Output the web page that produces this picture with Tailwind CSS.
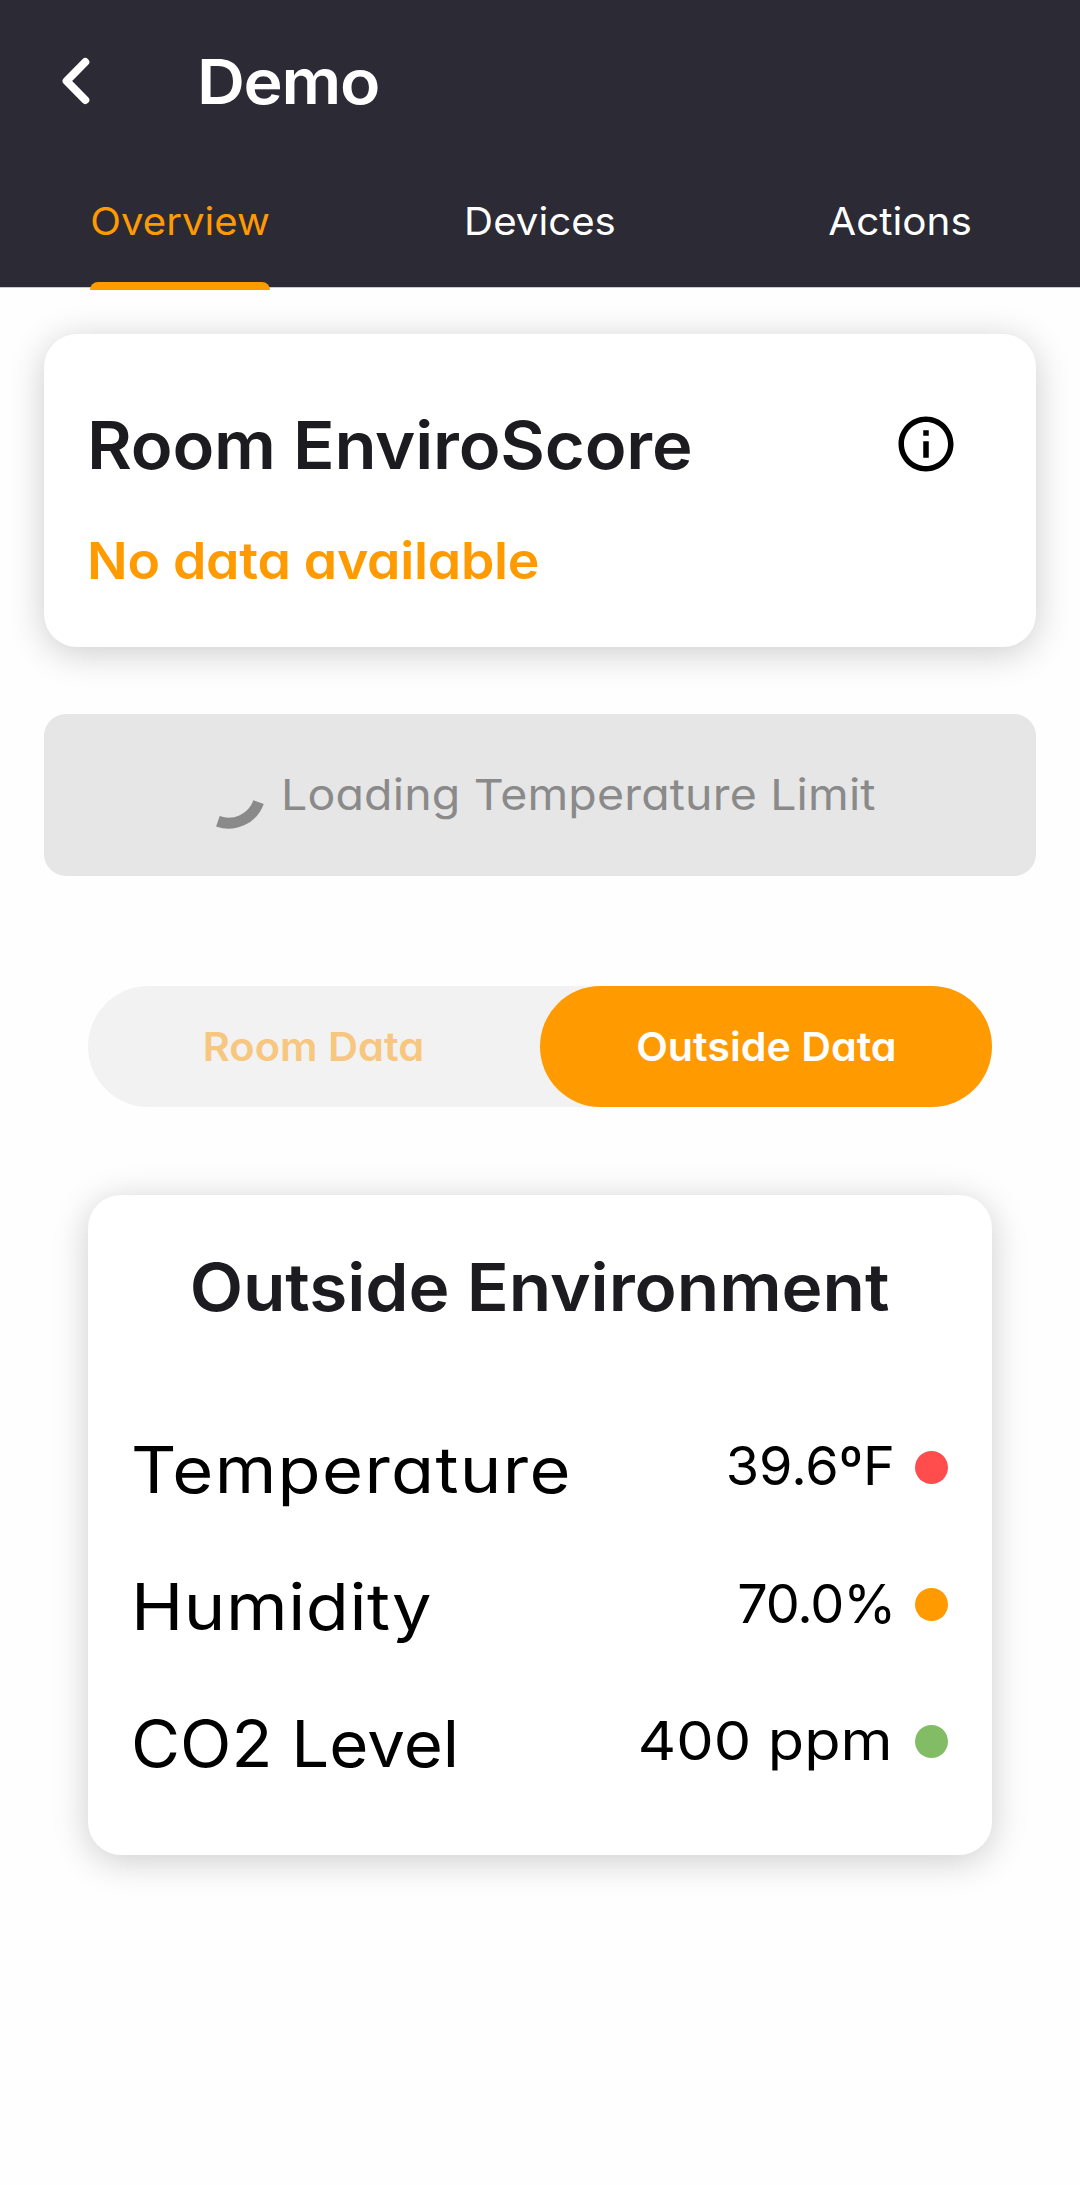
<!DOCTYPE html>
<html lang="en">
<head>
<meta charset="utf-8">
<title>Demo</title>
<script src="https://cdn.jsdelivr.net/npm/@tailwindcss/browser@4"></script>
</head>
<body class="min-h-screen bg-[#fefefe] font-[Inter,sans-serif] text-black whitespace-nowrap [font-feature-settings:'cv11']">

<header class="h-[288px] border-b border-[#c9c9cf] bg-[#2b2a35] text-white">
  <div class="flex h-[164px] items-center pl-[56px]">
    <svg class="-mt-[2px] h-[54px] w-[40px] shrink-0" viewBox="0 0 40 54" fill="none" stroke="currentColor" stroke-width="8" stroke-linecap="round" stroke-linejoin="round"><path d="M29.3 8 10.6 27 29.3 46"/></svg>
    <h1 class="ml-[101px] origin-left scale-x-[1.07] text-[62px] leading-[80px] font-semibold tracking-[-1.2px]">Demo</h1>
  </div>
  <nav class="grid h-[122px] grid-cols-3 text-[38.5px] leading-[114px]">
    <a class="relative mx-auto flex w-[180px] justify-center text-[#ff9a00]"><span class="scale-x-[1.045]">Overview</span><span class="absolute bottom-[-4px] left-0 h-[8px] w-[180px] rounded-t-lg bg-[#ff9a00]"></span></a>
    <a class="scale-x-[1.045] text-center">Devices</a>
    <a class="scale-x-[1.05] text-center">Actions</a>
  </nav>
</header>

<main class="px-11">
  <section class="mt-[46px] h-[313px] rounded-[33px] bg-white px-11 pt-[72px] shadow-[0_6px_36px_rgba(0,0,0,0.2)]">
    <div class="flex h-20 items-center justify-between pr-[33px]">
      <h2 class="-ml-px origin-left scale-x-[1.05] text-[65.5px] leading-[80px] font-semibold tracking-[-0.2px] text-[#1c1b1f]">Room EnviroScore</h2>
      <svg class="-mt-[5px] size-[66px]" viewBox="0 0 24 24" fill="currentColor"><path d="M11 7h2v2h-2zm0 4h2v6h-2zm1-9C6.48 2 2 6.48 2 12s4.48 10 10 10 10-4.48 10-10S17.52 2 12 2zm0 18c-4.41 0-8-3.59-8-8s3.59-8 8-8 8 3.59 8 8-3.59 8-8 8z"/></svg>
    </div>
    <p class="mt-[45px] -ml-px w-max origin-left scale-x-[1.05] text-[51px] leading-[60px] font-semibold tracking-[-0.25px] text-[#ff9a00]">No data available</p>
  </section>

  <button class="mt-[67px] flex h-[162px] w-full items-center rounded-[22px] bg-[#e6e6e6] pl-[141px] text-[#8a8a8a]">
    <svg class="size-[86px] shrink-0" viewBox="0 0 86 86" fill="none" stroke="currentColor" stroke-width="11"><path d="M73.6 50.1A31.9 31.9 0 0 1 32.9 69.3"/></svg>
    <span class="-mt-[2px] ml-[10px] origin-left scale-x-[1.081] text-[43px] tracking-[0.15px]">Loading Temperature Limit</span>
  </button>

  <div class="mx-11 mt-[110px] grid h-[121px] grid-cols-2 rounded-full bg-[#f2f2f2] text-center text-[40px] leading-[121px] font-semibold">
    <div class="pr-[2px] text-[#f7c780]"><span class="inline-block scale-x-[1.04]">Room Data</span></div>
    <div class="rounded-full bg-[#ff9a00] text-white"><span class="inline-block scale-x-[1.03]">Outside Data</span></div>
  </div>

  <section class="mx-11 mt-[88px] h-[660px] rounded-[33px] bg-white pt-[53px] pr-11 pl-[43px] shadow-[0_6px_36px_rgba(0,0,0,0.2)]">
    <h2 class="scale-x-[1.06] text-center text-[65.5px] leading-[80px] font-semibold tracking-[-0.1px] text-[#1c1b1f]">Outside Environment</h2>
    <dl class="mt-[73px]">
      <div class="flex h-[137.4px] items-center justify-between">
        <dt class="origin-left scale-x-[1.1] text-[64px] tracking-[1.2px]">Temperature</dt>
        <dd class="flex items-center gap-5 pb-2"><span class="text-[54px]">39.6ºF</span><span class="mt-[3px] size-[33px] rounded-full bg-[#ff4d4d]"></span></dd>
      </div>
      <div class="flex h-[137.4px] items-center justify-between">
        <dt class="origin-left scale-x-[1.1] text-[64px] tracking-[0.5px]">Humidity</dt>
        <dd class="flex items-center gap-5 pb-2"><span class="text-[54px] tracking-[-1.2px]">70.0%</span><span class="mt-[3px] size-[33px] rounded-full bg-[#ff9a00]"></span></dd>
      </div>
      <div class="flex h-[137.4px] items-center justify-between">
        <dt class="origin-left scale-x-[1.05] text-[64px]">CO2 Level</dt>
        <dd class="flex items-center gap-[22px] pb-2"><span class="origin-right scale-x-[1.1] text-[54px]">400 ppm</span><span class="mt-[3px] size-[33px] rounded-full bg-[#82bd66]"></span></dd>
      </div>
    </dl>
  </section>
</main>
</body>
</html>
